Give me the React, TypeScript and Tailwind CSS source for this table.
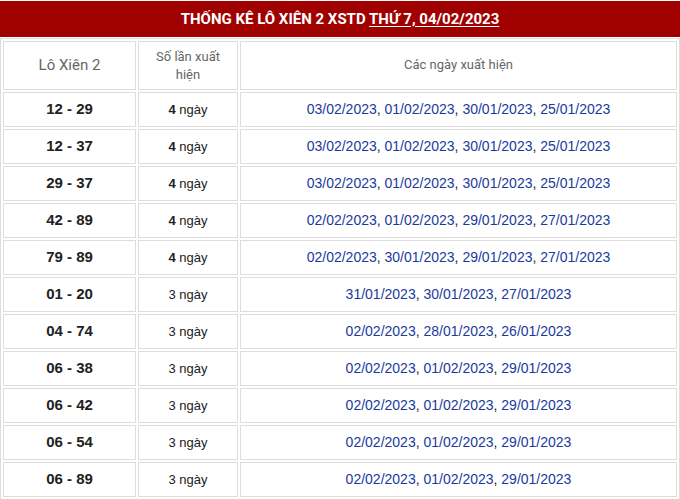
type Row = {
  pair: string
  count: number
  dates: string[]
}

const rows: Row[] = [
  { pair: '12 - 29', count: 4, dates: ['03/02/2023', '01/02/2023', '30/01/2023', '25/01/2023'] },
  { pair: '12 - 37', count: 4, dates: ['03/02/2023', '01/02/2023', '30/01/2023', '25/01/2023'] },
  { pair: '29 - 37', count: 4, dates: ['03/02/2023', '01/02/2023', '30/01/2023', '25/01/2023'] },
  { pair: '42 - 89', count: 4, dates: ['02/02/2023', '01/02/2023', '29/01/2023', '27/01/2023'] },
  { pair: '79 - 89', count: 4, dates: ['02/02/2023', '30/01/2023', '29/01/2023', '27/01/2023'] },
  { pair: '01 - 20', count: 3, dates: ['31/01/2023', '30/01/2023', '27/01/2023'] },
  { pair: '04 - 74', count: 3, dates: ['02/02/2023', '28/01/2023', '26/01/2023'] },
  { pair: '06 - 38', count: 3, dates: ['02/02/2023', '01/02/2023', '29/01/2023'] },
  { pair: '06 - 42', count: 3, dates: ['02/02/2023', '01/02/2023', '29/01/2023'] },
  { pair: '06 - 54', count: 3, dates: ['02/02/2023', '01/02/2023', '29/01/2023'] },
  { pair: '06 - 89', count: 3, dates: ['02/02/2023', '01/02/2023', '29/01/2023'] },
]

export default function App() {
  return (
    <div className="w-[680px] bg-white font-['Roboto',sans-serif]">
      {/* Tiêu đề */}
      <div className="mt-px h-[36px] bg-[#a00000] flex items-center justify-center text-[15px] font-bold text-white">
        <span>
          THỐNG KÊ LÔ XIÊN 2 XSTD <span className="underline underline-offset-2">THỨ 7, 04/02/2023</span>
        </span>
      </div>

      {/* Bảng thống kê */}
      <table className="mt-px w-[680px] table-fixed border-separate border-spacing-[2px] border border-[#dddddd]">
        <colgroup>
          <col className="w-[133px]" />
          <col className="w-[100px]" />
          <col />
        </colgroup>
        <thead>
          <tr>
            <th className="h-[49px] border border-[#dddddd] text-[15px] font-normal text-[#666666]">
              Lô Xiên 2
            </th>
            <th className="h-[49px] border border-[#dddddd] px-2 text-[13px] leading-[18px] font-normal text-[#666666]">
              Số lần xuất hiện
            </th>
            <th className="h-[49px] border border-[#dddddd] pb-[2px] text-[13px] font-normal text-[#666666]">
              Các ngày xuất hiện
            </th>
          </tr>
        </thead>
        <tbody className="font-['Liberation_Sans',Arial,sans-serif]">
          {rows.map((r) => (
            <tr key={r.pair}>
              <td className="h-[35px] border border-[#dddddd] text-center text-[15px] font-bold text-[#222222]">
                {r.pair}
              </td>
              <td className="h-[35px] border border-[#dddddd] text-center text-[13px] text-[#222222]">
                {r.count === 4 ? <b className="font-semibold">{r.count}</b> : r.count} ngày
              </td>
              <td className="h-[35px] border border-[#dddddd] text-center text-[14px] text-[#222222]">
                {r.dates.map((d, i) => (
                  <span key={d + i}>
                    <span className="text-[#1a3a9e]">{d}</span>
                    {i < r.dates.length - 1 ? ', ' : ''}
                  </span>
                ))}
              </td>
            </tr>
          ))}
        </tbody>
      </table>
    </div>
  )
}
